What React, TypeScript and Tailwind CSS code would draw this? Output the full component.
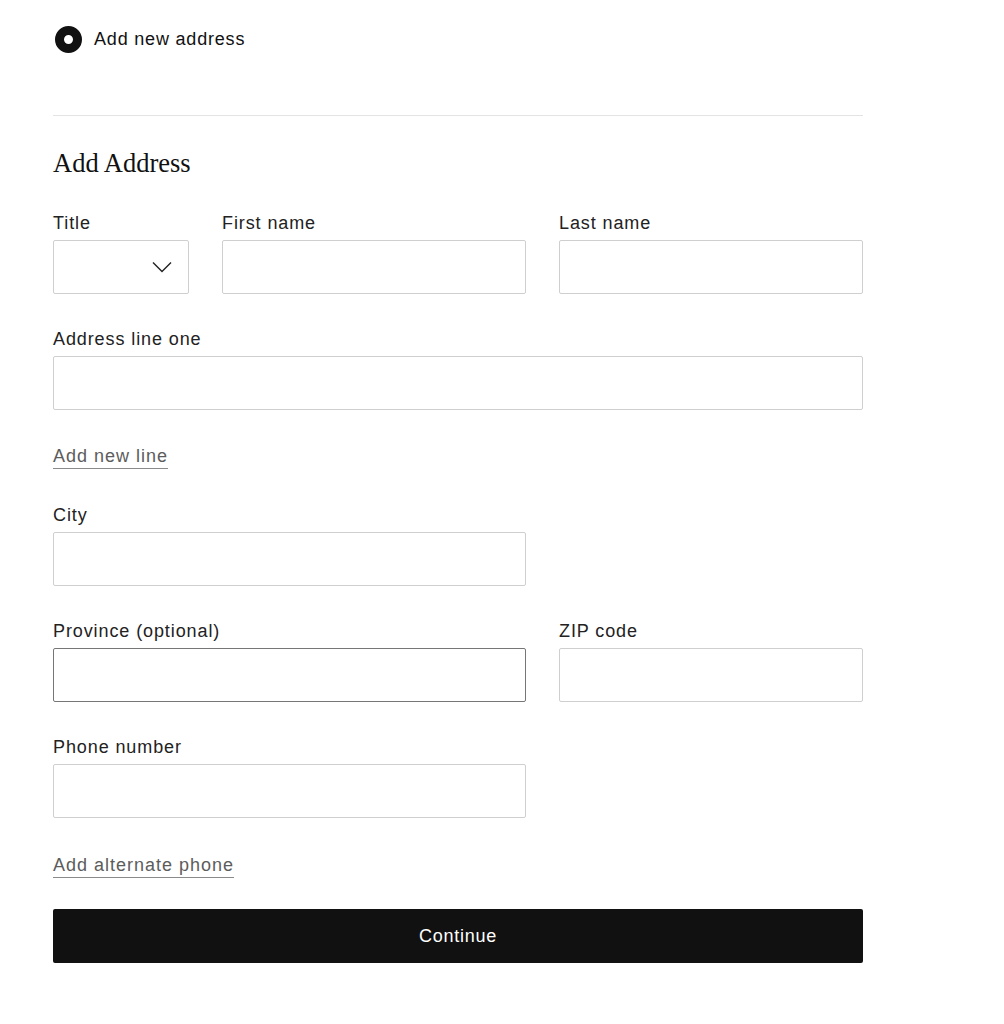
import { ReactNode } from 'react';

interface FieldProps {
  label: string;
  className?: string;
  focused?: boolean;
  children?: ReactNode;
}

function Field({ label, className = '', focused = false, children }: FieldProps) {
  return (
    <div className={className}>
      <label className="block h-[24px] pt-[1px] text-[18px] leading-[24px] tracking-[0.05em] text-[#222]">{label}</label>
      <div
        className={`relative mt-[6px] h-[54px] rounded-[2px] border bg-white ${
          focused ? 'border-[#767676]' : 'border-[#cfcfcf]'
        }`}
      >
        {children}
      </div>
    </div>
  );
}

function TextLink({ children }: { children: ReactNode }) {
  return (
    <div className="h-[25px]">
      <a
        href="#"
        className="inline-block border-b border-[#8a8a8a] pt-[1px] text-[18px] leading-[24px] tracking-[0.055em] text-[#5c5c5c]"
      >
        {children}
      </a>
    </div>
  );
}

export default function App() {
  return (
    <div className="min-h-screen bg-white font-['Liberation_Sans',Arial,sans-serif] text-[#111]">
      <div className="ml-[53px] w-[810px]">
        <label className="mt-[25px] flex h-[28px] items-center gap-[12px] pl-[2px]">
          <span className="h-[27px] w-[27px] rounded-full border-[9px] border-[#111]"></span>
          <span className="text-[18px] leading-[24px] tracking-[0.045em] text-[#111]">Add new address</span>
        </label>

        <div className="mt-[62px] border-t border-[#e3e3e3]"></div>

        <h2 className="mt-[31px] font-['Liberation_Serif',Georgia,serif] text-[26.5px] leading-[32px] text-[#111]">
          Add Address
        </h2>

        <div className="mt-[31px] grid grid-cols-[136px_304px_304px] gap-x-[33px]">
          <Field label="Title">
            <svg
              className="absolute right-[16px] top-[20px]"
              width="20"
              height="12"
              viewBox="0 0 20 12"
              fill="none"
              stroke="#222"
              strokeWidth="1.4"
            >
              <polyline points="1,1.5 10,10.5 19,1.5" />
            </svg>
          </Field>
          <Field label="First name" />
          <Field label="Last name" />
        </div>

        <Field label="Address line one" className="mt-[32px]" />

        <div className="mt-[33px]">
          <TextLink>Add new line</TextLink>
        </div>

        <div className="mt-[34px] grid grid-cols-[473px_304px] gap-x-[33px]">
          <Field label="City" />
        </div>

        <div className="mt-[32px] grid grid-cols-[473px_304px] gap-x-[33px]">
          <Field label="Province (optional)" focused />
          <Field label="ZIP code" />
        </div>

        <div className="mt-[32px] grid grid-cols-[473px_304px] gap-x-[33px]">
          <Field label="Phone number" />
        </div>

        <div className="mt-[34px]">
          <TextLink>Add alternate phone</TextLink>
        </div>

        <button className="mt-[32px] flex h-[54px] w-full items-center justify-center rounded-[2px] bg-[#111] text-[18px] tracking-[0.04em] text-white">
          Continue
        </button>
      </div>
    </div>
  );
}
